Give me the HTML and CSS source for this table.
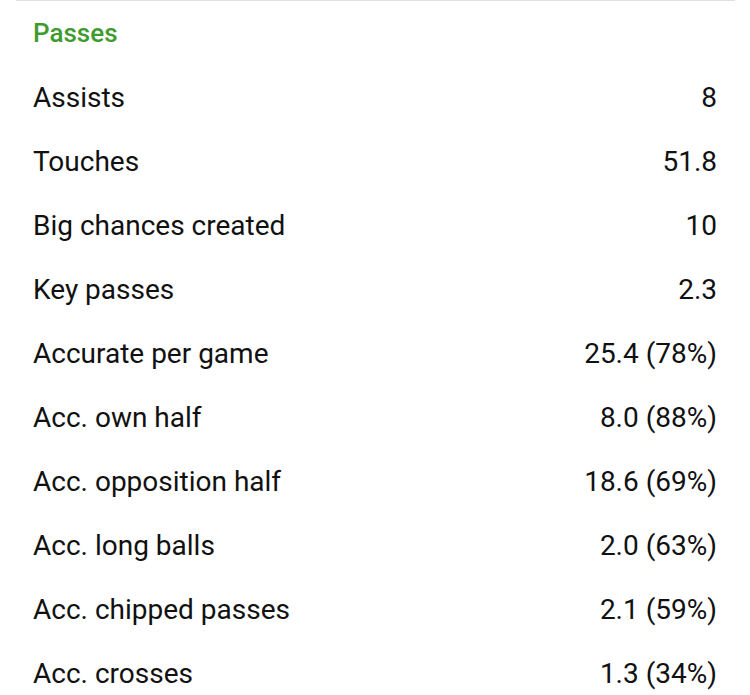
FILE: index.html
```html
<!DOCTYPE html>
<html>
<head>
<meta charset="utf-8">
<link rel="stylesheet" href="styles.css">
</head>
<body>
<section class="card">
  <h2 class="title">Passes</h2>
  <div class="row"><span>Assists</span><span>8</span></div>
  <div class="row"><span>Touches</span><span>51.8</span></div>
  <div class="row"><span>Big chances created</span><span>10</span></div>
  <div class="row"><span>Key passes</span><span>2.3</span></div>
  <div class="row"><span>Accurate per game</span><span>25.4 (78%)</span></div>
  <div class="row"><span>Acc. own half</span><span>8.0 (88%)</span></div>
  <div class="row"><span>Acc. opposition half</span><span>18.6 (69%)</span></div>
  <div class="row"><span>Acc. long balls</span><span>2.0 (63%)</span></div>
  <div class="row"><span>Acc. chipped passes</span><span>2.1 (59%)</span></div>
  <div class="row"><span>Acc. crosses</span><span>1.3 (34%)</span></div>
</section>
</body>
</html>
```
FILE: styles.css
```css
html, body {
  margin: 0;
  padding: 0;
  background: #ffffff;
}
body {
  font-family: Roboto, "Liberation Sans", sans-serif;
  font-size: 28px;
  color: #111111;
  overflow: hidden;
}
.card {
  margin: 0 15px 0 16px;
  border-top: 1px solid #e0e0e0;
  padding: 0 18px 0 17px;
}
.title {
  margin: 0;
  font-size: 26px;
  font-weight: 500;
  line-height: 64px;
  height: 65px;
  color: #3f9b30;
}
.row {
  display: flex;
  justify-content: space-between;
  line-height: 64px;
  height: 64px;
}
```
